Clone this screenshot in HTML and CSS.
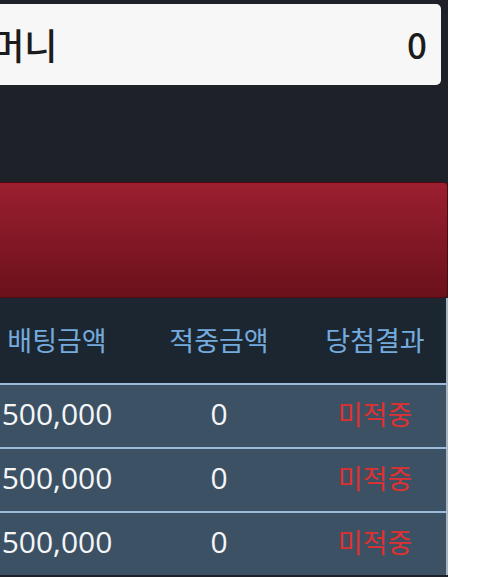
FILE: index.html
```html
<!DOCTYPE html>
<html lang="ko">
<head>
<meta charset="utf-8">
<link rel="stylesheet" href="styles.css">
</head>
<body>
<div class="panel">
  <div class="money">
    <span class="money-label">보유머니</span>
    <span class="money-value">0</span>
  </div>
  <div class="spacer"></div>
  <div class="red-btn"></div>
  <div class="table">
    <div class="row head">
      <div class="cell">배팅금액</div>
      <div class="cell">적중금액</div>
      <div class="cell">당첨결과</div>
    </div>
    <div class="row">
      <div class="cell num">500,000</div>
      <div class="cell num">0</div>
      <div class="cell result">미적중</div>
    </div>
    <div class="row">
      <div class="cell num">500,000</div>
      <div class="cell num">0</div>
      <div class="cell result">미적중</div>
    </div>
    <div class="row">
      <div class="cell num">500,000</div>
      <div class="cell num">0</div>
      <div class="cell result">미적중</div>
    </div>
  </div>
</div>
</body>
</html>
```
FILE: styles.css
```css
html, body {
  margin: 0;
  padding: 0;
  background: #ffffff;
  height: 577px;
  overflow: hidden;
}

.panel {
  width: 448px;
  height: 577px;
  background: #1e2228;
  overflow: hidden;
  padding-top: 4px;
  box-sizing: border-box;
  font-family: "Noto Sans CJK KR", "Noto Sans", sans-serif;
}

.money {
  margin-left: -100px;
  width: 541px;
  height: 81px;
  box-sizing: border-box;
  background: #f7f7f8;
  border-radius: 5px;
  display: flex;
  align-items: center;
  justify-content: space-between;
  padding: 0 14px 2px 25px;
  color: #1c1c1c;
  font-size: 36px;
  font-weight: 500;
}

.money-value {
  font-weight: 500;
  font-size: 35px;
}

.spacer {
  height: 97px;
}

.red-btn {
  margin-left: -20px;
  width: 468px;
  height: 116px;
  box-sizing: border-box;
  border: 1px solid #52090f;
  border-radius: 4px;
  background: linear-gradient(to bottom, #9b1f2f, #6a111b);
}

.table {
  margin-left: -20px;
  width: 468px;
  border-right: 2px solid #a7b4c2;
  box-sizing: border-box;
}

.row {
  display: grid;
  grid-template-columns: 154px 170px 142px;
  align-items: center;
  height: 64px;
  background: #3d5165;
  border-top: 2px solid #9dbad6;
  box-sizing: border-box;
  padding-bottom: 6px;
}

.row.head {
  height: 85px;
  background: #1c2630;
  border-top: 0;
  padding-bottom: 2px;
}

.cell {
  text-align: center;
}

.head .cell {
  color: #74abdf;
  font-size: 27px;
  font-weight: 400;
}

.num {
  color: #f4f6f8;
  font-family: "Open Sans", "Noto Sans CJK KR", sans-serif;
  font-size: 30px;
}

.result {
  color: #e0302f;
  font-size: 27px;
}
```
